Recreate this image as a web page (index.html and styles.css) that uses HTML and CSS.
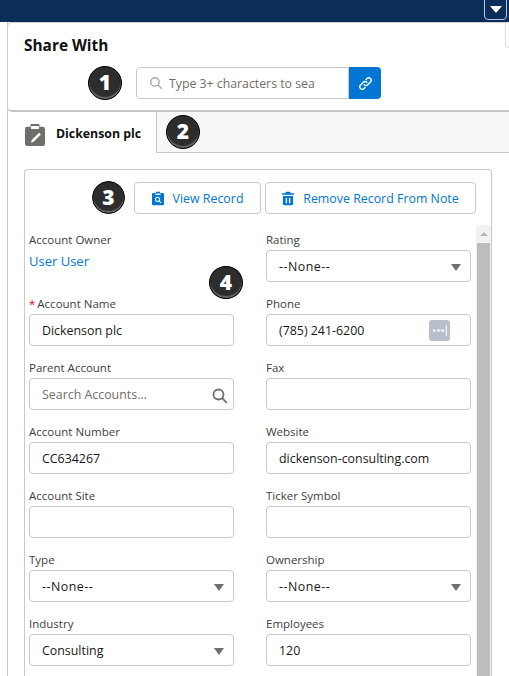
FILE: index.html
```html
<!DOCTYPE html>
<html lang="en">
<head>
    <meta charset="UTF-8">
    <title>Share With</title>
    <link rel="stylesheet" href="styles.css">
</head>
<body>
    <header class="topbar">
        <button class="menu-btn"><span class="caret caret-white"></span></button>
    </header>
    <div class="edge-tab"></div>

    <main class="panel">
        <section class="share-card">
            <h2>Share With</h2>
            <div class="share-row">
                <div class="share-input">
                    <svg class="icon-search" viewBox="0 0 16 16"><circle cx="6.8" cy="6.8" r="4.8"/><path d="M10.4 10.4 14.6 14.6"/></svg>
                    <span>Type 3+ characters to sea</span>
                </div>
                <button class="link-btn">
                    <svg viewBox="0 0 16 16"><path d="M6.6 9.4a2.6 2.6 0 0 0 3.7 0l3-3a2.6 2.6 0 0 0-3.7-3.7l-1 1"/><path d="M9.4 6.6a2.6 2.6 0 0 0-3.7 0l-3 3a2.6 2.6 0 0 0 3.7 3.7l1-1"/></svg>
                </button>
                <span class="badge badge-1">1</span>
            </div>
        </section>

        <nav class="tabs">
            <div class="tab">
                <svg class="tab-icon" viewBox="0 0 22 24"><path d="M7 0h8a1 1 0 0 1 1 1v2h3.5A2.5 2.5 0 0 1 22 5.500V21.500A2.500 2.500 0 0 1 19.500 24H2.500A2.500 2.500 0 0 1 0 21.500V5.500A2.500 2.500 0 0 1 2.500 3H6V1a1 1 0 0 1 1-1z" fill="#706e6b"/><rect x="6.500" y="2" width="9" height="3.500" rx="1" fill="#fff"/><path d="M15.500 9.500l2 2-8 8-3 1 1-3z" fill="#fff"/></svg>
                <span class="tab-label">Dickenson plc</span>
            </div>
            <span class="badge badge-2">2</span>
        </nav>

        <section class="record-box">
            <div class="record-actions">
                <span class="badge badge-3">3</span>
                <button class="action-btn view-btn">
                    <svg viewBox="0 0 14 16"><path d="M4.500 0h5v1.500H12.500A1.500 1.500 0 0 1 14 3v11.500A1.500 1.500 0 0 1 12.500 16h-11A1.500 1.500 0 0 1 0 14.500V3A1.500 1.500 0 0 1 1.500 1.500H4.500z" fill="#0176d3"/><rect x="4" y="2.200" width="6" height="1.600" fill="#fff"/><circle cx="6.500" cy="9" r="2.400" fill="none" stroke="#fff" stroke-width="1.200"/><path d="M8.300 10.800 10.500 13" stroke="#fff" stroke-width="1.300"/></svg>
                    View Record
                </button>
                <button class="action-btn remove-btn">
                    <svg viewBox="0 0 14 16"><path d="M5 0h4a1 1 0 0 1 1 1v1h4v1.600H0V2h4V1a1 1 0 0 1 1-1z" fill="#0176d3"/><path d="M1 5h12v9.500a1.500 1.500 0 0 1-1.500 1.500h-9A1.500 1.500 0 0 1 1 14.500z" fill="#0176d3"/><rect x="4.300" y="7.500" width="1.600" height="6" fill="#fff"/><rect x="8.100" y="7.500" width="1.600" height="6" fill="#fff"/></svg>
                    Remove Record From Note
                </button>
            </div>

            <div class="record-scroll">
                <div class="form-grid">
                    <div class="form-item">
                        <label>Account Owner</label>
                        <a class="owner-link">User User</a>
                    </div>
                    <div class="form-item">
                        <label>Rating</label>
                        <div class="field none-value">--None--<span class="caret"></span></div>
                    </div>

                    <div class="form-item">
                        <label><span class="req">*</span>Account Name</label>
                        <div class="field">Dickenson plc</div>
                    </div>
                    <div class="form-item">
                        <label>Phone</label>
                        <div class="field">(785) 241-6200
                            <span class="phone-dots">
                                <svg viewBox="0 0 20 20"><circle cx="5" cy="10" r="1.300"/><circle cx="9" cy="10" r="1.300"/><circle cx="13" cy="10" r="1.300"/><rect x="16" y="5" width="1" height="10"/></svg>
                            </span>
                        </div>
                    </div>

                    <div class="form-item">
                        <label>Parent Account</label>
                        <div class="field placeholder">Search Accounts...
                            <svg class="field-search" viewBox="0 0 16 16"><circle cx="6.500" cy="6.500" r="5"/><path d="M10.200 10.200 14.800 14.800"/></svg>
                        </div>
                    </div>
                    <div class="form-item">
                        <label>Fax</label>
                        <div class="field"></div>
                    </div>

                    <div class="form-item">
                        <label>Account Number</label>
                        <div class="field">CC634267</div>
                    </div>
                    <div class="form-item">
                        <label>Website</label>
                        <div class="field">dickenson-consulting.com</div>
                    </div>

                    <div class="form-item">
                        <label>Account Site</label>
                        <div class="field"></div>
                    </div>
                    <div class="form-item">
                        <label>Ticker Symbol</label>
                        <div class="field"></div>
                    </div>

                    <div class="form-item">
                        <label>Type</label>
                        <div class="field none-value">--None--<span class="caret"></span></div>
                    </div>
                    <div class="form-item">
                        <label>Ownership</label>
                        <div class="field none-value">--None--<span class="caret"></span></div>
                    </div>

                    <div class="form-item">
                        <label>Industry</label>
                        <div class="field">Consulting<span class="caret"></span></div>
                    </div>
                    <div class="form-item">
                        <label>Employees</label>
                        <div class="field">120</div>
                    </div>
                </div>
                <span class="badge badge-4">4</span>

                <div class="scrollbar">
                    <span class="scroll-up"></span>
                    <div class="scroll-thumb"></div>
                </div>
            </div>
        </section>
    </main>
</body>
</html>
```

FILE: styles.css
```css
:root {
    --navy: #0a2d5a;
    --blue: #0176d3;
    --border: #c9c9c9;
    --text: #181818;
    --label: #3e3e3c;
}
html, body {
    margin: 0;
    padding: 0;
    height: 676px;
    overflow: hidden;
    background: #fff;
    color: var(--text);
    font-family: "Open Sans", "Noto Sans", Arial, sans-serif;
    font-size: 12.4px;
}
button {
    font-family: inherit;
    cursor: pointer;
}
.topbar {
    height: 22px;
    background: var(--navy);
    position: relative;
}
.menu-btn {
    position: absolute;
    right: 2px;
    top: -2px;
    width: 23px;
    height: 22px;
    padding: 0;
    background: transparent;
    border: 1px solid #b9c4d4;
    border-radius: 0 0 4px 4px;
    display: flex;
    align-items: center;
    justify-content: center;
}
.edge-tab {
    position: absolute;
    right: -8px;
    top: 22px;
    width: 10px;
    height: 24px;
    border: 1px solid #dcdcdc;
    border-radius: 0 0 0 4px;
}
.panel {
    margin-left: 7px;
    border-left: 1px solid var(--border);
}
.share-card {
    height: 90px;
    margin-left: -1px;
    box-sizing: border-box;
    padding: 14px 16px 0 16px;
    border: 1px solid #cfcfcf;
    border-right: none;
    border-radius: 5px 0 0 5px;
    border-bottom: 2px solid #c4c4c4;
    background: #fff;
}
.share-card h2 {
    margin: 0;
    font-size: 15.4px;
    line-height: 18px;
    font-weight: 700;
    color: #111;
}
.share-row {
    position: relative;
    display: flex;
    margin: 12px 0 0 112px;
}
.share-input {
    width: 213px;
    height: 32px;
    box-sizing: border-box;
    display: flex;
    align-items: center;
    gap: 6px;
    padding-left: 12px;
    border: 1px solid var(--border);
    border-radius: 4px 0 0 4px;
    color: #706e6b;
    font-size: 12.3px;
    white-space: nowrap;
    overflow: hidden;
}
.icon-search {
    width: 14px;
    height: 14px;
    flex: none;
    fill: none;
    stroke: #a9a9a9;
    stroke-width: 1.600;
}
.link-btn {
    width: 32px;
    height: 32px;
    padding: 0;
    border: none;
    border-radius: 0 4px 4px 0;
    background: var(--blue);
    display: flex;
    align-items: center;
    justify-content: center;
}
.link-btn svg {
    width: 15px;
    height: 15px;
    fill: none;
    stroke: #fff;
    stroke-width: 1.500;
    stroke-linecap: round;
}
.badge {
    position: absolute;
    width: 34px;
    height: 34px;
    box-sizing: border-box;
    border: 1px solid #000;
    border-radius: 50%;
    background: #2d2d2d;
    box-shadow: inset 0 -2px 1px #6a6a6a;
    color: #fff;
    font-size: 21px;
    font-weight: 800;
    line-height: 31px;
    text-align: center;
    font-family: "Open Sans", Arial, sans-serif;
}
.badge-1 { left: -48px; top: -1px; }
.badge-2 { left: 158px; top: 3px; }
.badge-3 { left: 67px; top: 11px; width: 33px; height: 33px; }
.badge-4 { left: 184px; top: 41px; width: 34px; height: 33px; }
.tabs {
    position: relative;
    height: 41px;
    display: flex;
    background: #f8f8f8;
    border-bottom: 1px solid var(--border);
    box-sizing: border-box;
}
.tab {
    width: 149px;
    height: 41px;
    box-sizing: border-box;
    background: #fff;
    border-right: 1px solid var(--border);
    display: flex;
    align-items: center;
    gap: 11px;
    padding: 0 0 0 17px;
    font-size: 12.3px;
    font-weight: 700;
    color: #111;
}
.tab-icon {
    width: 20px;
    height: 22px;
    flex: none;
    margin-top: 5px;
}
.tab-label {
    margin-top: 2px;
}
.record-box {
    margin: 16px 0 0 16px;
    width: 468px;
    height: 520px;
    box-sizing: border-box;
    border: 1px solid var(--border);
    border-bottom: none;
    border-radius: 4px 4px 0 0;
}
.record-actions {
    position: relative;
    display: flex;
    justify-content: flex-end;
    gap: 4px;
    padding: 12px 15px 0 0;
}
.action-btn {
    height: 32px;
    box-sizing: border-box;
    display: flex;
    align-items: center;
    justify-content: center;
    gap: 9px;
    padding: 0;
    background: #fff;
    border: 1px solid var(--border);
    border-radius: 4px;
    color: var(--blue);
    font-size: 12.4px;
}
.action-btn svg {
    width: 12px;
    height: 15px;
    flex: none;
}
.view-btn { width: 127px; }
.remove-btn { width: 211px; }
.record-scroll {
    position: relative;
    margin-top: 11px;
    padding-left: 4px;
}
.form-grid {
    display: grid;
    grid-template-columns: 205px 205px;
    column-gap: 32px;
    row-gap: 0;
}
.form-item {
    height: 64px;
    position: relative;
}
.form-item label {
    display: block;
    height: 25px;
    padding-top: 7px;
    box-sizing: border-box;
    font-size: 11.500px;
    line-height: 16px;
    color: var(--label);
}
.req {
    color: #ea001e;
    margin-right: 2px;
}
.owner-link {
    display: block;
    color: var(--blue);
    font-size: 13px;
    line-height: 22px;
}
.field {
    position: relative;
    height: 32px;
    box-sizing: border-box;
    padding-left: 12px;
    border: 1px solid var(--border);
    border-radius: 4px;
    line-height: 32px;
    color: var(--text);
    font-size: 12.4px;
    white-space: nowrap;
}
.none-value {
    letter-spacing: 0.5px;
}
.placeholder {
    color: #706e6b;
}
.caret {
    position: absolute;
    right: 9px;
    top: 13px;
    width: 0;
    height: 0;
    border-left: 5.500px solid transparent;
    border-right: 5.500px solid transparent;
    border-top: 7px solid #706e6b;
}
.caret-white {
    position: static;
    border-left-width: 6px;
    border-right-width: 6px;
    border-top-color: #fff;
}
.phone-dots {
    position: absolute;
    right: 20px;
    top: 5px;
    width: 21px;
    height: 21px;
    border-radius: 3px;
    background: #b8bfcc;
}
.phone-dots svg {
    display: block;
    fill: #fff;
}
.field-search {
    position: absolute;
    right: 5px;
    top: 9px;
    width: 16px;
    height: 16px;
    fill: none;
    stroke: #706e6b;
    stroke-width: 1.800;
}
.scrollbar {
    position: absolute;
    right: 0;
    top: 0;
    width: 15px;
    height: 500px;
    background: #f2f2f2;
}
.scroll-up {
    position: absolute;
    left: 4px;
    top: 7px;
    width: 0;
    height: 0;
    border-left: 4px solid transparent;
    border-right: 4px solid transparent;
    border-bottom: 4px solid #b5b5b5;
}
.scroll-thumb {
    position: absolute;
    left: 1px;
    right: 1px;
    top: 18px;
    bottom: 0;
    background: #bdbdbd;
}
```
